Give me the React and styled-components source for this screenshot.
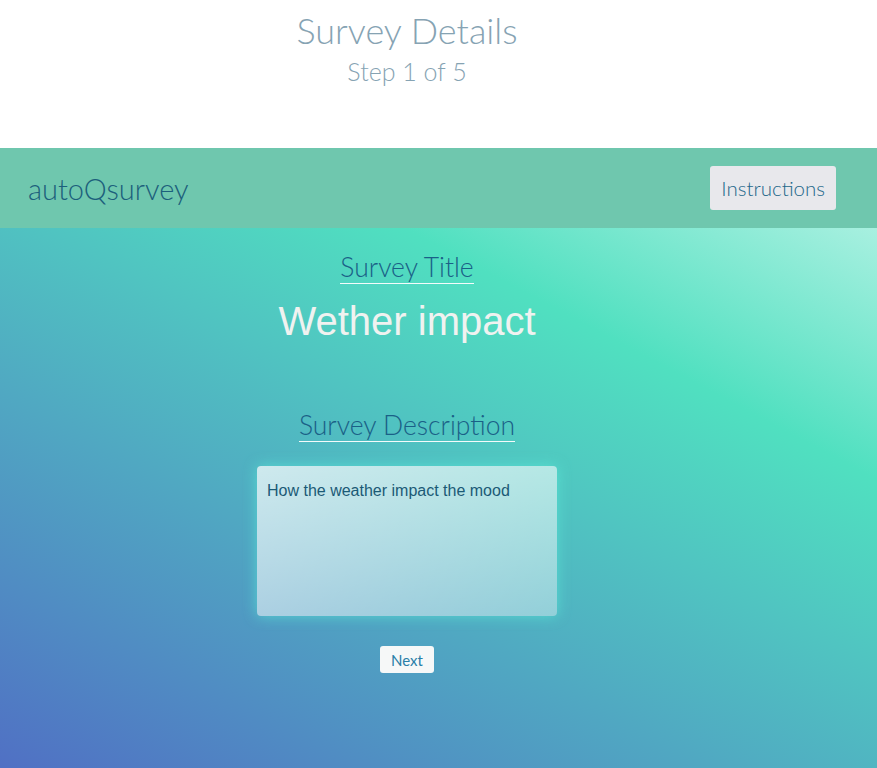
import styled, { createGlobalStyle } from "styled-components";

const GlobalStyle = createGlobalStyle`
  body {
    margin: 0;
    font-family: "Lato", "Liberation Sans", sans-serif;
    background: #ffffff;
  }
`;

const Top = styled.div`
  width: 814px;
  height: 148px;
  display: flex;
  flex-direction: column;
  align-items: center;
`;

const PageTitle = styled.h1`
  margin: 9px 0 0;
  font-size: 36px;
  font-weight: 300;
  line-height: 42px;
  color: #86a3b3;
`;

const StepText = styled.h2`
  margin: 5px 0 0;
  font-size: 25px;
  font-weight: 300;
  line-height: 30px;
  color: #86a3b3;
`;

const NavBar = styled.header`
  height: 80px;
  background: #6fc7ae;
  display: flex;
  align-items: center;
  justify-content: space-between;
  padding: 0 41px 0 28px;
`;

const Logo = styled.div`
  font-size: 29px;
  font-weight: 300;
  color: #1c5f7c;
`;

const NavButton = styled.button`
  height: 44px;
  padding: 0 11px;
  border: none;
  border-radius: 3px;
  background: #e8e8ec;
  font-family: "Lato", "Liberation Sans", sans-serif;
  font-size: 20.5px;
  font-weight: 300;
  color: #23678a;
`;

const Main = styled.main`
  min-height: 540px;
  background: linear-gradient(28deg, #5070c4 0%, #50e0c0 75%, #a8f0e0 100%);
`;

const Column = styled.div`
  width: 814px;
  display: flex;
  flex-direction: column;
  align-items: center;
  padding: 24px 0 60px;
`;

const Label = styled.div`
  font-size: 26.5px;
  font-weight: 300;
  line-height: 31px;
  color: #1a6087;
  border-bottom: 1px solid #f4fbfb;
  margin-top: ${(p) => p.$top || 0}px;
`;

const TitleValue = styled.div`
  font-family: "Liberation Sans", Arial, sans-serif;
  font-size: 40px;
  line-height: 44px;
  color: #f0f2f0;
  margin-top: 15px;
`;

const DescBox = styled.div`
  box-sizing: border-box;
  width: 300px;
  height: 150px;
  margin-top: 24px;
  padding: 16px 10px;
  border-radius: 4px;
  background: linear-gradient(
    160deg,
    rgba(255, 255, 255, 0.72),
    rgba(255, 255, 255, 0.38)
  );
  box-shadow: 0 0 14px rgba(90, 235, 215, 0.7);
  font-family: "Liberation Sans", Arial, sans-serif;
  font-size: 16px;
  color: #1b5a76;
`;

const NextButton = styled.button`
  margin-top: 30px;
  height: 27px;
  padding: 0 11px;
  border: none;
  border-radius: 3px;
  background: #f6f8f8;
  font-family: "Lato", "Liberation Sans", sans-serif;
  font-size: 15px;
  font-weight: 400;
  color: #2a7fa8;
`;

export default function App() {
  return (
    <>
      <GlobalStyle />
      <Top>
        <PageTitle>Survey Details</PageTitle>
        <StepText>Step 1 of 5</StepText>
      </Top>
      <NavBar>
        <Logo>autoQsurvey</Logo>
        <NavButton>Instructions</NavButton>
      </NavBar>
      <Main>
        <Column>
          <Label>Survey Title</Label>
          <TitleValue>Wether impact</TitleValue>
          <Label $top={67}>Survey Description</Label>
          <DescBox>How the weather impact the mood</DescBox>
          <NextButton>Next</NextButton>
        </Column>
      </Main>
    </>
  );
}
